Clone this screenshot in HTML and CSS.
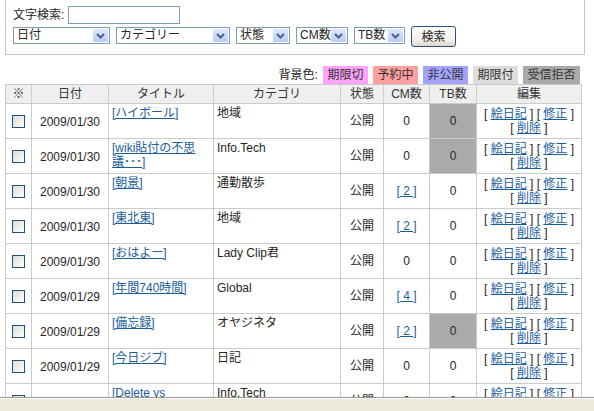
FILE: index.html
```html
<!DOCTYPE html>
<html lang="ja">
<head>
<meta charset="utf-8">
<title>記事一覧</title>
<link rel="stylesheet" href="styles.css">
</head>
<body>
<div class="page">
  <form class="search">
    <div class="search-row">
      <span class="search-label">文字検索:</span>
      <span class="text-input"></span>
    </div>
    <div class="filter-row">
      <span class="sel w-date"><span class="sel-text">日付</span><span class="sel-arrow"><svg width="9" height="6" viewBox="0 0 9 6"><path d="M1 1 L4.5 4.5 L8 1" fill="none" stroke="#4d6185" stroke-width="2"/></svg></span></span>
      <span class="sel w-cat"><span class="sel-text">カテゴリー</span><span class="sel-arrow"><svg width="9" height="6" viewBox="0 0 9 6"><path d="M1 1 L4.5 4.5 L8 1" fill="none" stroke="#4d6185" stroke-width="2"/></svg></span></span>
      <span class="sel w-state"><span class="sel-text">状態</span><span class="sel-arrow"><svg width="9" height="6" viewBox="0 0 9 6"><path d="M1 1 L4.5 4.5 L8 1" fill="none" stroke="#4d6185" stroke-width="2"/></svg></span></span>
      <span class="sel w-cm"><span class="sel-text">CM数</span><span class="sel-arrow"><svg width="9" height="6" viewBox="0 0 9 6"><path d="M1 1 L4.5 4.5 L8 1" fill="none" stroke="#4d6185" stroke-width="2"/></svg></span></span>
      <span class="sel w-tb"><span class="sel-text">TB数</span><span class="sel-arrow"><svg width="9" height="6" viewBox="0 0 9 6"><path d="M1 1 L4.5 4.5 L8 1" fill="none" stroke="#4d6185" stroke-width="2"/></svg></span></span>
      <span class="btn">検索</span>
    </div>
  </form>

  <div class="legend">
    <span class="legend-label">背景色:</span>
    <span class="tag tag-expired">期限切</span>
    <span class="tag tag-reserved">予約中</span>
    <span class="tag tag-private">非公開</span>
    <span class="tag tag-limited">期限付</span>
    <span class="tag tag-refused">受信拒否</span>
  </div>

  <table class="list">
    <colgroup>
      <col class="c-chk"><col class="c-date"><col class="c-title"><col class="c-cat"><col class="c-state"><col class="c-cm"><col class="c-tb"><col class="c-edit">
    </colgroup>
    <thead>
      <tr><th>※</th><th>日付</th><th>タイトル</th><th>カテゴリ</th><th>状態</th><th>CM数</th><th>TB数</th><th>編集</th></tr>
    </thead>
    <tbody>
      <tr>
        <td class="chk"><span class="box"></span></td>
        <td class="date">2009/01/30</td>
        <td class="title"><a href="#">[ハイボール]</a></td>
        <td class="cat">地域</td>
        <td class="num">公開</td>
        <td class="num">0</td>
        <td class="num refused">0</td>
        <td class="edit">[ <a href="#">絵日記</a> ] [ <a href="#">修正</a> ]<br>[ <a href="#">削除</a> ]</td>
      </tr>
      <tr>
        <td class="chk"><span class="box"></span></td>
        <td class="date">2009/01/30</td>
        <td class="title"><a href="#">[wiki貼付の不思<br>議･･･]</a></td>
        <td class="cat">Info.Tech</td>
        <td class="num">公開</td>
        <td class="num">0</td>
        <td class="num refused">0</td>
        <td class="edit">[ <a href="#">絵日記</a> ] [ <a href="#">修正</a> ]<br>[ <a href="#">削除</a> ]</td>
      </tr>
      <tr>
        <td class="chk"><span class="box"></span></td>
        <td class="date">2009/01/30</td>
        <td class="title"><a href="#">[朝景]</a></td>
        <td class="cat">通勤散歩</td>
        <td class="num">公開</td>
        <td class="num"><a href="#">[ 2 ]</a></td>
        <td class="num">0</td>
        <td class="edit">[ <a href="#">絵日記</a> ] [ <a href="#">修正</a> ]<br>[ <a href="#">削除</a> ]</td>
      </tr>
      <tr>
        <td class="chk"><span class="box"></span></td>
        <td class="date">2009/01/30</td>
        <td class="title"><a href="#">[東北東]</a></td>
        <td class="cat">地域</td>
        <td class="num">公開</td>
        <td class="num"><a href="#">[ 2 ]</a></td>
        <td class="num">0</td>
        <td class="edit">[ <a href="#">絵日記</a> ] [ <a href="#">修正</a> ]<br>[ <a href="#">削除</a> ]</td>
      </tr>
      <tr>
        <td class="chk"><span class="box"></span></td>
        <td class="date">2009/01/30</td>
        <td class="title"><a href="#">[おはよー]</a></td>
        <td class="cat">Lady Clip君</td>
        <td class="num">公開</td>
        <td class="num">0</td>
        <td class="num">0</td>
        <td class="edit">[ <a href="#">絵日記</a> ] [ <a href="#">修正</a> ]<br>[ <a href="#">削除</a> ]</td>
      </tr>
      <tr>
        <td class="chk"><span class="box"></span></td>
        <td class="date">2009/01/29</td>
        <td class="title"><a href="#">[年間740時間]</a></td>
        <td class="cat">Global</td>
        <td class="num">公開</td>
        <td class="num"><a href="#">[ 4 ]</a></td>
        <td class="num">0</td>
        <td class="edit">[ <a href="#">絵日記</a> ] [ <a href="#">修正</a> ]<br>[ <a href="#">削除</a> ]</td>
      </tr>
      <tr>
        <td class="chk"><span class="box"></span></td>
        <td class="date">2009/01/29</td>
        <td class="title"><a href="#">[備忘録]</a></td>
        <td class="cat">オヤジネタ</td>
        <td class="num">公開</td>
        <td class="num"><a href="#">[ 2 ]</a></td>
        <td class="num refused">0</td>
        <td class="edit">[ <a href="#">絵日記</a> ] [ <a href="#">修正</a> ]<br>[ <a href="#">削除</a> ]</td>
      </tr>
      <tr>
        <td class="chk"><span class="box"></span></td>
        <td class="date">2009/01/29</td>
        <td class="title"><a href="#">[今日ジブ]</a></td>
        <td class="cat">日記</td>
        <td class="num">公開</td>
        <td class="num">0</td>
        <td class="num">0</td>
        <td class="edit">[ <a href="#">絵日記</a> ] [ <a href="#">修正</a> ]<br>[ <a href="#">削除</a> ]</td>
      </tr>
      <tr>
        <td class="chk"><span class="box"></span></td>
        <td class="date">2009/01/28</td>
        <td class="title"><a href="#">[Delete vs<br>Backspace]</a></td>
        <td class="cat">Info.Tech</td>
        <td class="num">公開</td>
        <td class="num">0</td>
        <td class="num">0</td>
        <td class="edit">[ <a href="#">絵日記</a> ] [ <a href="#">修正</a> ]<br>[ <a href="#">削除</a> ]</td>
      </tr>
    </tbody>
  </table>
</div>
<div class="statusbar"></div>
</body>
</html>
```
FILE: styles.css
```css
html, body {
  margin: 0;
  padding: 0;
  background: #fff;
  overflow: hidden;
}
body {
  font-family: "Liberation Sans", "Noto Sans CJK JP", sans-serif;
  font-size: 12px;
  line-height: 14px;
  color: #262626;
}
.page {
  padding: 0 0 0 5px;
  width: 580px;
}
.search {
  margin: 0;
  border: 1px solid #c6c6c6;
  border-top: none;
  padding: 6px 0 10px 7px;
}
.search-row {
  display: flex;
  align-items: center;
  height: 18px;
}
.search-label {
  width: 55px;
}
.text-input {
  display: block;
  width: 110px;
  height: 16px;
  border: 1px solid #7f9db9;
  background: #fff;
}
.filter-row {
  display: flex;
  align-items: center;
  gap: 6px;
  margin-top: 3px;
  height: 17px;
}
.sel {
  display: flex;
  align-items: center;
  box-sizing: border-box;
  height: 17px;
  border: 1px solid #7f9db9;
  background: #fff;
  padding: 0 1px 0 3px;
}
.sel-text {
  flex: 1;
  white-space: nowrap;
  line-height: 15px;
}
.sel-arrow {
  display: flex;
  align-items: center;
  justify-content: center;
  width: 15px;
  height: 13px;
  background: linear-gradient(#dde7fd, #b9cdf6);
  border-radius: 1px;
}
.w-date { width: 97px; }
.w-cat { width: 114px; }
.w-state { width: 54px; }
.w-cm { width: 52px; }
.w-tb { width: 51px; }
.btn {
  display: flex;
  align-items: center;
  justify-content: center;
  box-sizing: border-box;
  width: 45px;
  height: 21px;
  margin-top: 2px;
  border: 1px solid #2c4f7c;
  border-radius: 3px;
  background: linear-gradient(#ffffff, #f0efe9 70%, #dcd9cc);
}
.legend {
  display: flex;
  justify-content: flex-end;
  align-items: center;
  gap: 5px;
  width: 575px;
  margin-top: 11px;
  height: 18px;
}
.legend-label {
  margin-right: 0;
}
.tag {
  display: flex;
  align-items: center;
  height: 18px;
  padding: 0 4.5px;
  color: #333;
}
.tag-expired { background: #ffa3ff; }
.tag-reserved { background: #ffa0a0; }
.tag-private { background: #a3a3ff; }
.tag-limited { background: #dddddd; }
.tag-refused { background: #aaaaaa; }

.list {
  border-collapse: collapse;
  table-layout: fixed;
  width: 576px;
  border: 1px solid #cbcbcb;
}
.c-chk { width: 26px; }
.c-date { width: 77px; }
.c-title { width: 105px; }
.c-cat { width: 127px; }
.c-state { width: 43px; }
.c-cm { width: 46px; }
.c-tb { width: 47px; }
.c-edit { width: 105px; }
.list th, .list td {
  border: 1px solid #cbcbcb;
  padding: 0;
}
.list th {
  background: #efefef;
  font-weight: normal;
  height: 18px;
  text-align: center;
  color: #333;
}
.list td {
  height: 35px;
  box-sizing: border-box;
}
.list a {
  color: #1b5e9e;
  text-decoration: underline;
}
.chk {
  text-align: center;
  vertical-align: middle;
}
.box {
  display: inline-block;
  vertical-align: middle;
  width: 11px;
  height: 11px;
  border: 1px solid #1c5180;
  background: linear-gradient(135deg, #dcdcd7, #f6f6f4 80%, #fff);
}
.date {
  text-align: center;
  vertical-align: middle;
  padding-top: 2px !important;
}
.title, .cat {
  vertical-align: top;
  padding: 2px 3px 0 !important;
}
.num {
  text-align: center;
  vertical-align: middle;
}
.refused {
  background: #aaaaaa;
}
.edit {
  text-align: center;
  vertical-align: middle;
  white-space: nowrap;
}
.statusbar {
  position: fixed;
  left: 0;
  right: 0;
  bottom: 0;
  height: 13px;
  background: #ece9d8;
  border-top: 1px solid #9a9a9a;
  box-shadow: inset 0 1px #ffffff;
}
```
